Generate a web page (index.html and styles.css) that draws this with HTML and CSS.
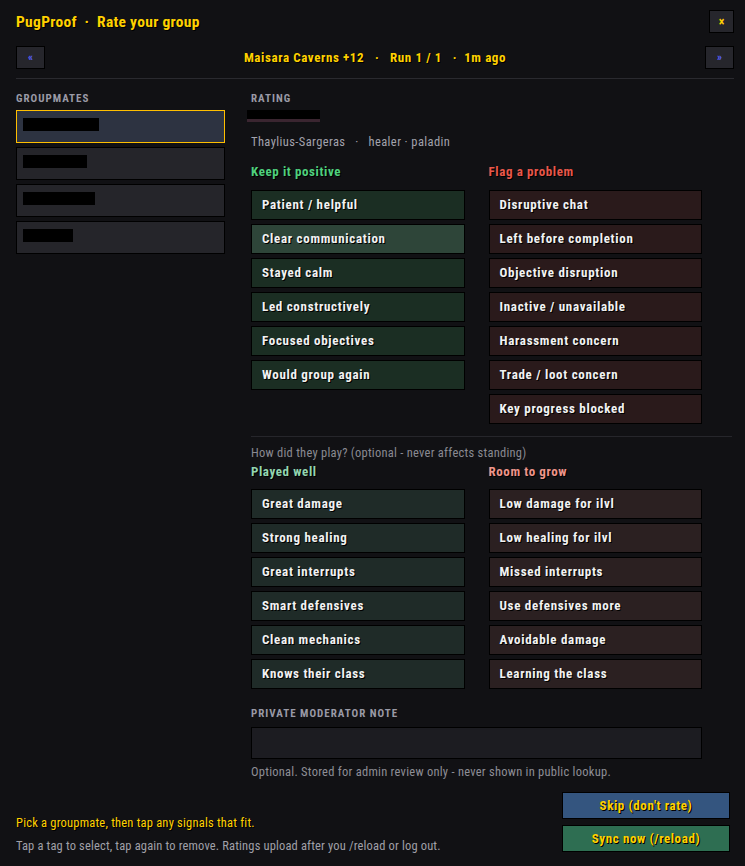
FILE: index.html
```html
<!DOCTYPE html>
<html>
<head>
  <meta charset="UTF-8">
  <title>PugProof - Rate your group</title>
  <link rel="stylesheet" href="styles.css">
</head>
<body>
  <div class="frame">
    <div class="titlebar">
      <div class="title">PugProof &nbsp;·&nbsp; Rate your group</div>
      <button class="close">×</button>
    </div>

    <div class="navbar">
      <button class="nav">«</button>
      <div class="run">Maisara Caverns +12 &nbsp;&nbsp;·&nbsp;&nbsp; Run 1 / 1 &nbsp;&nbsp;·&nbsp; 1m ago</div>
      <button class="nav">»</button>
    </div>

    <div class="content">
      <div class="groupmates">
        <div class="label">GROUPMATES</div>
        <div class="mate selected"><span class="redact" style="width:76px"></span></div>
        <div class="mate"><span class="redact" style="width:64px"></span></div>
        <div class="mate"><span class="redact" style="width:72px"></span></div>
        <div class="mate"><span class="redact" style="width:50px"></span></div>
      </div>

      <div class="rating">
        <div class="label">RATING</div>
        <div class="name"><span class="name-redact"></span></div>
        <div class="sub">Thaylius-Sargeras &nbsp;&nbsp;·&nbsp;&nbsp; healer · paladin</div>

        <div class="cols">
          <div class="col">
            <div class="head pos">Keep it positive</div>
            <div class="tag good">Patient / helpful</div>
            <div class="tag good on">Clear communication</div>
            <div class="tag good">Stayed calm</div>
            <div class="tag good">Led constructively</div>
            <div class="tag good">Focused objectives</div>
            <div class="tag good">Would group again</div>
          </div>
          <div class="col">
            <div class="head neg">Flag a problem</div>
            <div class="tag bad">Disruptive chat</div>
            <div class="tag bad">Left before completion</div>
            <div class="tag bad">Objective disruption</div>
            <div class="tag bad">Inactive / unavailable</div>
            <div class="tag bad">Harassment concern</div>
            <div class="tag bad">Trade / loot concern</div>
            <div class="tag bad">Key progress blocked</div>
          </div>
        </div>

        <div class="divider"></div>
        <div class="hint">How did they play? (optional - never affects standing)</div>

        <div class="cols">
          <div class="col">
            <div class="head pos2">Played well</div>
            <div class="tag well">Great damage</div>
            <div class="tag well">Strong healing</div>
            <div class="tag well">Great interrupts</div>
            <div class="tag well">Smart defensives</div>
            <div class="tag well">Clean mechanics</div>
            <div class="tag well">Knows their class</div>
          </div>
          <div class="col">
            <div class="head neg2">Room to grow</div>
            <div class="tag grow">Low damage for ilvl</div>
            <div class="tag grow">Low healing for ilvl</div>
            <div class="tag grow">Missed interrupts</div>
            <div class="tag grow">Use defensives more</div>
            <div class="tag grow">Avoidable damage</div>
            <div class="tag grow">Learning the class</div>
          </div>
        </div>

        <div class="label note-label">PRIVATE MODERATOR NOTE</div>
        <div class="notebox"></div>
        <div class="note-hint">Optional. Stored for admin review only - never shown in public lookup.</div>
      </div>
    </div>

    <div class="footer">
      <div class="help">
        <div class="help-main">Pick a groupmate, then tap any signals that fit.</div>
        <div class="help-sub">Tap a tag to select, tap again to remove. Ratings upload after you /reload or log out.</div>
      </div>
      <div class="actions">
        <button class="act skip">Skip (don't rate)</button>
        <button class="act sync">Sync now (/reload)</button>
      </div>
    </div>
  </div>
</body>
</html>
```

FILE: styles.css
```css
body {
  margin: 0;
  background-color: #111114;
  font-family: "Roboto Condensed", "Liberation Sans Narrow", "DejaVu Sans Condensed", sans-serif;
  font-stretch: condensed;
  color: #f0f0f0;
}
.frame {
  width: 745px;
  height: 866px;
  padding: 10px 11px 0 16px;
  box-sizing: border-box;
}
button {
  font-family: inherit;
  font-stretch: condensed;
  cursor: pointer;
}
.titlebar {
  display: flex;
  justify-content: space-between;
  align-items: center;
  height: 23px;
}
.title {
  color: #ffd100;
  font-size: 15.5px;
  font-weight: bold;
  letter-spacing: 0.3px;
  text-shadow: 1px 1px 0 #000;
}
.close {
  width: 25px;
  height: 23px;
  background-color: #26262c;
  border: 1px solid #000;
  color: #ffd100;
  font-size: 12px;
  font-weight: bold;
  padding: 0;
}
.navbar {
  display: flex;
  align-items: center;
  margin-top: 13px;
  height: 23px;
  padding-bottom: 9px;
  border-bottom: 1px solid #2a2a2f;
}
.nav {
  width: 29px;
  height: 23px;
  background-color: #26262c;
  border: 1px solid #000;
  color: #5a62ff;
  font-size: 11px;
  font-weight: bold;
  padding: 0;
}
.run {
  flex: 1;
  text-align: center;
  color: #ffd100;
  font-size: 13px;
  font-weight: bold;
  letter-spacing: 0.6px;
  text-shadow: 1px 1px 0 #000;
}
.content {
  display: flex;
  gap: 26px;
  padding-top: 12px;
}
.label {
  color: #9a9aa6;
  font-size: 11px;
  font-weight: bold;
  letter-spacing: 1px;
  height: 16px;
  line-height: 16px;
}
.groupmates {
  width: 209px;
  display: flex;
  flex-direction: column;
  gap: 4px;
}
.groupmates .label {
  margin-bottom: -1px;
}
.mate {
  height: 33px;
  background-color: #25252a;
  border: 1px solid #000;
  display: flex;
  align-items: center;
  padding: 0 0 4px 6px;
  box-sizing: border-box;
}
.mate.selected {
  background-color: #2d3341;
  border-color: #ffbf00;
}
.redact {
  display: inline-block;
  height: 13px;
  background-color: #000;
}
.rating {
  flex: 1;
}
.name {
  margin-top: 3px;
  height: 12px;
  padding-left: 2px;
}
.name-redact {
  display: block;
  width: 73px;
  height: 9px;
  margin-left: -6px;
  background-color: #000;
  border-bottom: 3px solid #3a2530;
}
.sub {
  color: #a2a2ac;
  font-size: 12.5px;
  letter-spacing: 0.4px;
  margin-top: 12px;
  height: 16px;
  line-height: 16px;
}
.cols {
  display: flex;
  gap: 24px;
  width: 451px;
}
.col {
  flex: 1;
  display: flex;
  flex-direction: column;
  gap: 4px;
}
.head {
  font-size: 13px;
  font-weight: bold;
  letter-spacing: 0.6px;
  height: 16px;
  line-height: 16px;
  margin-top: 14px;
  margin-bottom: 6px;
  text-shadow: 1px 1px 0 #000;
}
.pos { color: #4fd17e; }
.neg { color: #e8574a; }
.pos2 { color: #93d6b0; margin-top: 3px; margin-bottom: 5px; }
.neg2 { color: #ee958b; margin-top: 3px; margin-bottom: 5px; }
.tag {
  height: 28px;
  line-height: 28px;
  border: 1px solid #000;
  padding-left: 10px;
  font-size: 13px;
  font-weight: bold;
  letter-spacing: 0.7px;
  color: #f2f2f2;
  text-shadow: 1px 1px 0 #000;
}
.good { background-color: #1b2e23; }
.good.on { background-color: #2e4539; }
.bad { background-color: #2a1a1b; }
.well { background-color: #1f2b28; }
.grow { background-color: #2b2021; }
.divider {
  height: 1px;
  width: 481px;
  background-color: #26262b;
  margin-top: 12px;
}
.hint {
  color: #8a8a92;
  font-size: 12.5px;
  letter-spacing: 0.25px;
  margin-top: 8px;
  height: 16px;
  line-height: 16px;
}
.note-label {
  margin-top: 17px;
}
.notebox {
  width: 449px;
  height: 30px;
  margin-top: 5px;
  background-color: #1c1c21;
  border: 1px solid #000;
}
.note-hint {
  color: #8e8e96;
  font-size: 12.5px;
  letter-spacing: 0.25px;
  margin-top: 5px;
  height: 16px;
  line-height: 16px;
}
.footer {
  display: flex;
  justify-content: space-between;
  align-items: flex-start;
  margin-top: 12px;
}
.help {
  padding-top: 23px;
}
.help-main {
  color: #ffd100;
  font-size: 12.5px;
  letter-spacing: 0.2px;
  height: 16px;
  line-height: 16px;
  text-shadow: 1px 1px 0 #000;
}
.help-sub {
  color: #a0a0a8;
  font-size: 12.5px;
  letter-spacing: 0.15px;
  height: 16px;
  line-height: 16px;
  margin-top: 7px;
}
.actions {
  display: flex;
  flex-direction: column;
  gap: 6px;
  margin-right: 4px;
}
.act {
  width: 168px;
  height: 27px;
  border: 1px solid #000;
  color: #ffd100;
  font-size: 13px;
  font-weight: bold;
  letter-spacing: 0.6px;
  text-shadow: 1px 1px 0 #000;
}
.skip { background-color: #34557f; }
.sync { background-color: #2e6e52; }
```
